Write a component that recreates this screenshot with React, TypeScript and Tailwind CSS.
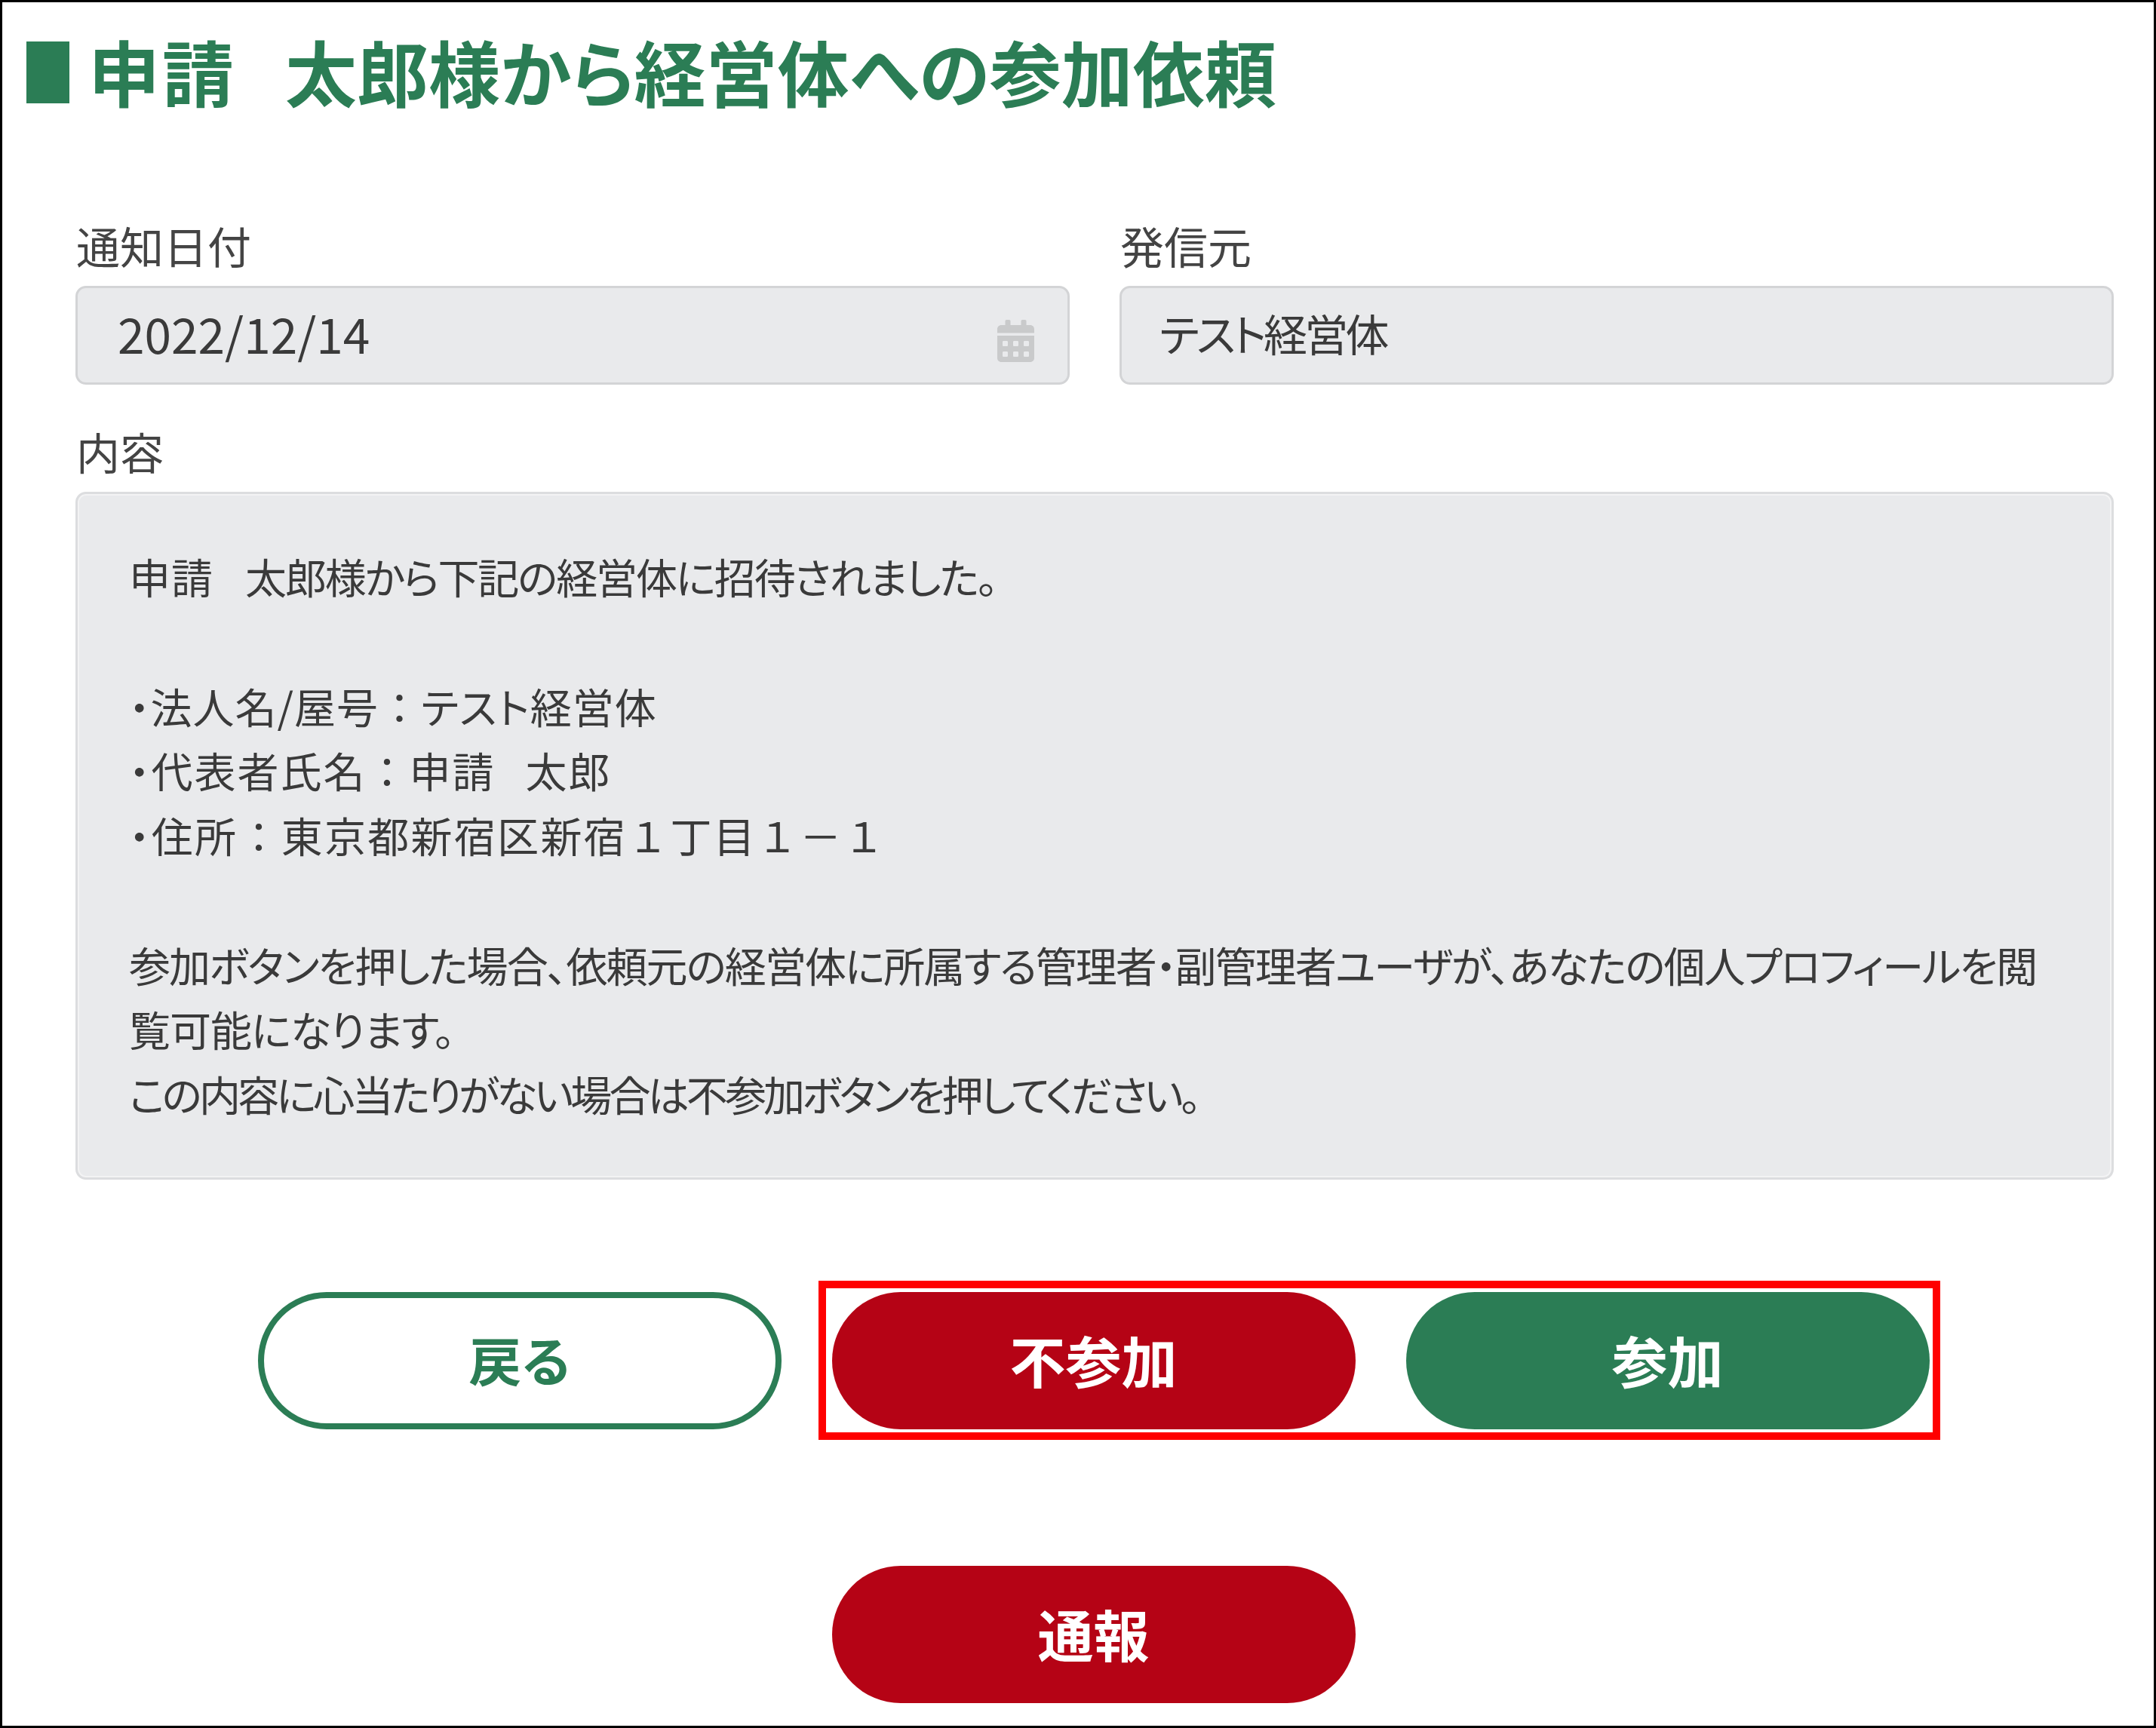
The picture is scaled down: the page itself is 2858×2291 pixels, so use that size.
import { FaCalendarAlt } from "react-icons/fa";

const fieldClass =
  "h-[131px] flex items-center rounded-[14px] bg-[#e9eaec] border-[3px] border-[#d3d4d6] text-[#3a3a3a] px-[50px]";

const labelClass = "text-[58px] leading-[70px] mb-[19px] text-[#444444] ml-[1px]";

const noPalt = "[font-feature-settings:normal]";

export default function App() {
  return (
    <div className="w-[2858px] h-[2291px] bg-white border-[3px] border-black font-['Noto_Sans_CJK_JP',sans-serif] [font-feature-settings:'palt'] overflow-hidden">
      {/* タイトル */}
      <div className="flex items-center gap-[25px] ml-[32px] mt-[52px] h-[82px]">
        <div className="w-[57px] h-[82px] bg-[#2b7d55]" />
        <h1 className="text-[95px] font-bold leading-none text-[#2b7d55] whitespace-pre mt-[-6px]">
          <span className="mr-[65px] tracking-[3px]">申請</span>太郎様から経営体への参加依頼
        </h1>
      </div>

      <div className="ml-[97px] w-[2702px] mt-[153px]">
        {/* 通知日付 / 発信元 */}
        <div className="grid grid-cols-2 gap-[66px]">
          <div>
            <p className={labelClass}>通知日付</p>
            <div className={`${fieldClass} justify-between`}>
              <span className="text-[64px] ml-[3px] mt-[-8px]">2022/12/14</span>
              <FaCalendarAlt className="text-[#c9cacb] w-[49px] h-[56px] mt-[14px] mr-[-6px]" />
            </div>
          </div>
          <div>
            <p className={labelClass}>発信元</p>
            <div className={fieldClass}>
              <span className="text-[58px] tracking-[-3.8px] mt-[-6px]">テスト経営体</span>
            </div>
          </div>
        </div>

        {/* 内容 */}
        <p className={`${labelClass} mt-[53px]`}>内容</p>
        <div className="h-[912px] rounded-[14px] bg-[#e9eaec] border-[3px] border-[#dcdddf] shadow-[inset_0_0_0_2px_#f3f3f4] pl-[68px] pr-[50px] pt-[66px] text-[55px] leading-[85.75px] text-[#3a3a3a] whitespace-pre">
          <p className="tracking-[-2.1px]">
            <span className="mr-[42px] tracking-[1px]">申請</span>太郎様から下記の経営体に招待されました。
          </p>
          <p>&nbsp;</p>
          <p className="tracking-[1px]">
            ・法人名/屋号<span className={noPalt}>：</span>テスト経営体
          </p>
          <p className="tracking-[2px]">
            ・代表者氏名<span className={noPalt}>：</span>
            <span className="mr-[40px]">申請</span>太郎
          </p>
          <p className="tracking-[2.3px]">
            ・住所<span className={noPalt}>：</span>東京都新宿区新宿
            <span className={noPalt}>１</span>丁目<span className={noPalt}>１－１</span>
          </p>
          <p>&nbsp;</p>
          <p className="tracking-[-1.9px]">
            参加ボタンを押した場合、依頼元の経営体に所属する管理者・副管理者ユーザが、あなたの個人プロフィールを閲
          </p>
          <p className="tracking-[-1px]">覧可能になります。</p>
          <p className="tracking-[-3.85px]">この内容に心当たりがない場合は不参加ボタンを押してください。</p>
        </div>

        {/* ボタン */}
        <div className="relative flex justify-center gap-[67px] mt-[149px] pr-[3px]">
          <button className="w-[694px] h-[182px] pb-[6px] rounded-full border-[8px] border-[#2b7d55] bg-white text-[#2b7d55] text-[70px] font-bold">
            戻る
          </button>
          <button className="w-[694px] h-[182px] pb-[6px] rounded-full bg-[#b50315] text-white text-[74px] font-bold">
            不参加
          </button>
          <button className="w-[694px] h-[182px] pb-[6px] rounded-full bg-[#2b7d55] text-white text-[74px] font-bold">
            参加
          </button>
          <div className="absolute left-[985px] top-[-15px] w-[1487px] h-[211px] border-[10px] border-[#ff0000]" />
        </div>

        <div className="flex justify-center mt-[181px] pr-[3px]">
          <button className="w-[694px] h-[182px] pb-[6px] rounded-full bg-[#b50315] text-white text-[74px] font-bold">
            通報
          </button>
        </div>
      </div>
    </div>
  );
}
